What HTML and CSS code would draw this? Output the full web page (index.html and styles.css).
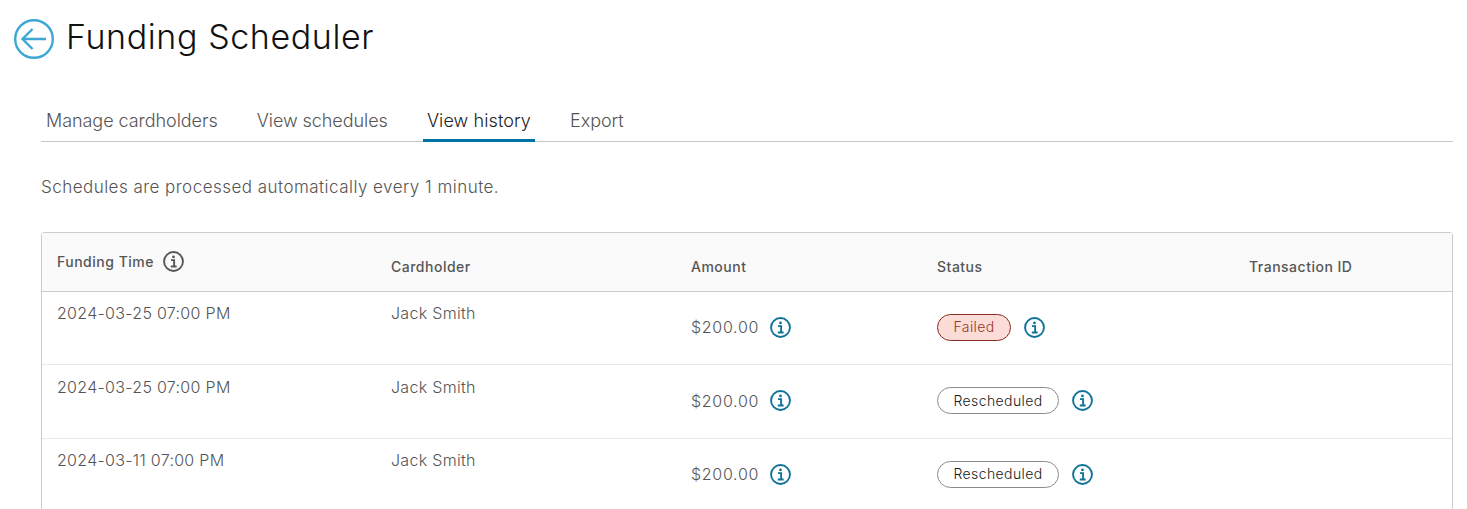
FILE: index.html
```html
<!DOCTYPE html>
<html lang="en">
<head>
<meta charset="utf-8">
<title>Funding Scheduler</title>
<link rel="stylesheet" href="styles.css">
</head>
<body>
<svg class="defs" width="0" height="0" aria-hidden="true">
  <symbol id="info" viewBox="0 0 20 20">
    <circle cx="10" cy="10" r="9" fill="none" stroke="currentColor" stroke-width="1.8"/>
    <circle cx="10" cy="5.6" r="1.3" fill="currentColor"/>
    <path d="M7.6 8.7H10.6V14.6M7.4 14.8H13" fill="none" stroke="currentColor" stroke-width="1.8"/>
  </symbol>
</svg>
<header class="title-row">
  <svg class="back" viewBox="0 0 40 40" aria-hidden="true">
    <circle cx="20" cy="20" r="18.8" fill="none" stroke="#3fa7d6" stroke-width="2.4"/>
    <path d="M8.5 20H32M18.5 10L8.5 20L18.5 30" fill="none" stroke="#3fa7d6" stroke-width="2.4"/>
  </svg>
  <h1 class="title">Funding Scheduler</h1>
</header>
<main class="content">
  <nav class="tabs">
    <a class="tab">Manage cardholders</a>
    <a class="tab">View schedules</a>
    <a class="tab tab-active">View history</a>
    <a class="tab">Export</a>
  </nav>
  <p class="note">Schedules are processed automatically every 1 minute.</p>
  <section class="grid">
    <div class="row head">
      <div class="cell head-first">Funding Time <svg class="ico ico-grey"><use href="#info"/></svg></div>
      <div class="cell">Cardholder</div>
      <div class="cell">Amount</div>
      <div class="cell">Status</div>
      <div class="cell">Transaction ID</div>
    </div>
    <div class="row body-row">
      <div class="cell">2024-03-25 07:00 PM</div>
      <div class="cell">Jack Smith</div>
      <div class="cell with-icon amount">$200.00 <svg class="ico"><use href="#info"/></svg></div>
      <div class="cell with-icon"><span class="pill pill-failed">Failed</span><svg class="ico"><use href="#info"/></svg></div>
      <div class="cell"></div>
    </div>
    <div class="row body-row">
      <div class="cell">2024-03-25 07:00 PM</div>
      <div class="cell">Jack Smith</div>
      <div class="cell with-icon amount">$200.00 <svg class="ico"><use href="#info"/></svg></div>
      <div class="cell with-icon"><span class="pill">Rescheduled</span><svg class="ico"><use href="#info"/></svg></div>
      <div class="cell"></div>
    </div>
    <div class="row body-row">
      <div class="cell">2024-03-11 07:00 PM</div>
      <div class="cell">Jack Smith</div>
      <div class="cell with-icon amount">$200.00 <svg class="ico"><use href="#info"/></svg></div>
      <div class="cell with-icon"><span class="pill">Rescheduled</span><svg class="ico"><use href="#info"/></svg></div>
      <div class="cell"></div>
    </div>
  </section>
</main>
</body>
</html>
```
FILE: styles.css
```css
* { box-sizing: border-box; }
html, body { height: 100%; overflow: hidden; }
body {
  margin: 0;
  background: #fff;
  font-family: Inter, "Liberation Sans", sans-serif;
  color: #666;
}
.defs { display: block; height: 0; }
.title-row {
  display: flex;
  align-items: center;
  gap: 12px;
  height: 40px;
  margin: 19px 0 0 14px;
}
.back { width: 40px; height: 40px; flex: none; }
.title {
  margin: 0;
  font-size: 34px;
  font-weight: 300;
  color: #111;
  position: relative;
  top: -3px;
  letter-spacing: 0.6px;
}
.content { margin: 0 14px 0 41px; }
.tabs {
  display: flex;
  gap: 31px;
  height: 43px;
  margin-top: 40px;
  padding-left: 1px;
  border-bottom: 1px solid #c8c8c8;
}
.tab {
  height: 43px;
  padding: 9px 4px 0;
  font-size: 18px;
  font-weight: 300;
  line-height: 26px;
  color: #555;
  letter-spacing: -0.05px;
}
.tab-active {
  color: #222;
  border-bottom: 3px solid #0072a3;
  letter-spacing: 0.1px;
}
.note {
  margin: 33px 0 33px;
  font-size: 17px;
  font-weight: 300;
  line-height: 24px;
  color: #555;
  letter-spacing: 0.47px;
}
.grid {
  border: 1px solid #ccc;
  border-radius: 3px 3px 0 0;
}
.row {
  display: grid;
  grid-template-columns: 334px 300px 246px 312px 1fr;
  padding-left: 15px;
  border-bottom: 1px solid #e8e8e8;
}
.head {
  height: 59px;
  background: #fafafa;
  border-bottom-color: #ccc;
  font-size: 14px;
  font-weight: 500;
  color: #565656;
  align-items: center;
  letter-spacing: 0.5px;
}
.head .cell { padding-top: 9px; }
.head .head-first {
  display: flex;
  align-items: center;
  gap: 9px;
  padding-top: 0;
  margin-top: -1px;
}
.body-row {
  height: 73.4px;
  font-size: 16px;
  font-weight: 300;
  line-height: 20px;
  color: #555;
  padding-top: 11.4px;
  letter-spacing: 0.3px;
}
.with-icon {
  display: flex;
  align-items: center;
  align-self: start;
  gap: 11px;
  margin-top: 10px;
  height: 28px;
}
.amount { letter-spacing: 0.7px; }
.ico {
  width: 21px;
  height: 21px;
  flex: none;
  color: #0f7299;
}
.ico-grey { color: #565656; }
.pill {
  display: inline-flex;
  align-items: center;
  height: 27px;
  padding: 0 15.5px;
  border: 1px solid #8c8c8c;
  border-radius: 14px;
  font-size: 14px;
  font-weight: 300;
  letter-spacing: 0.4px;
  color: #1a1a1a;
  margin-right: 1.5px;
}
.pill-failed {
  background: #fcdcd6;
  border-color: #8a2a20;
  color: #93362c;
}
```
